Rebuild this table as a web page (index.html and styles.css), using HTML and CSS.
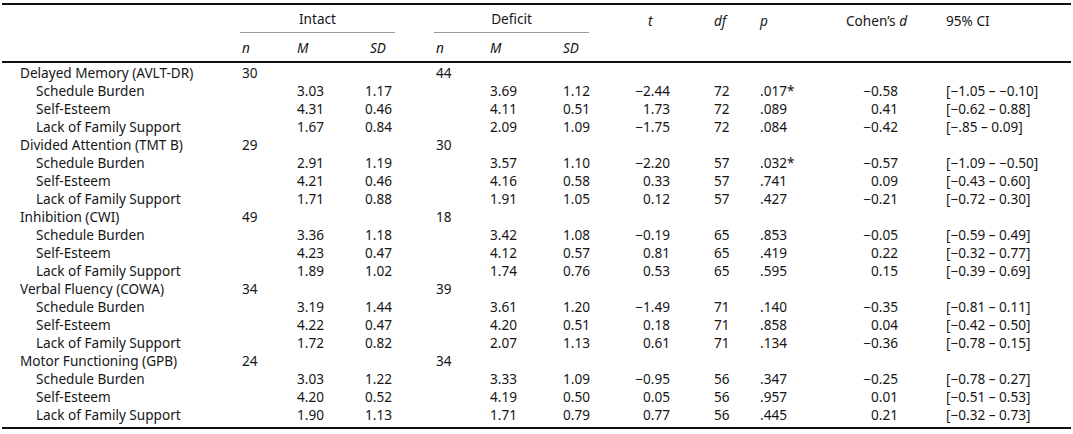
FILE: index.html
```html
<!DOCTYPE html>
<html lang="en">
<head>
<meta charset="utf-8">
<title>Cognitive deficit comparison</title>
<link rel="stylesheet" href="styles.css">
</head>
<body>
<table class="stats">
  <colgroup>
    <col class="c-label"><col class="c-n"><col class="c-m"><col class="c-sd">
    <col class="c-n2"><col class="c-m2"><col class="c-sd2">
    <col class="c-t"><col class="c-df"><col class="c-p"><col class="c-d"><col class="c-ci">
  </colgroup>
  <thead>
    <tr class="h1">
      <th></th>
      <th colspan="3" class="group"><div class="group-label">Intact</div></th>
      <th colspan="3" class="group"><div class="group-label">Deficit</div></th>
      <th class="h-t"><i>t</i></th>
      <th><i>df</i></th>
      <th><i>p</i></th>
      <th>Cohen’s <i>d</i></th>
      <th>95% CI</th>
    </tr>
    <tr class="h2">
      <th></th>
      <th><i>n</i></th><th><i>M</i></th><th class="h-sd"><i>SD</i></th>
      <th><i>n</i></th><th><i>M</i></th><th><i>SD</i></th>
      <th></th><th></th><th></th><th></th><th></th>
    </tr>
  </thead>
  <tbody>
    <tr class="grp first"><td class="lbl">Delayed Memory (AVLT-DR)</td><td>30</td><td></td><td></td><td>44</td><td></td><td></td><td class="r"></td><td></td><td></td><td class="r d"></td><td></td></tr>
    <tr><td class="sub">Schedule Burden</td><td></td><td>3.03</td><td>1.17</td><td></td><td>3.69</td><td>1.12</td><td class="r">−2.44</td><td>72</td><td>.017*</td><td class="r d">−0.58</td><td>[−1.05 – −0.10]</td></tr>
    <tr><td class="sub">Self-Esteem</td><td></td><td>4.31</td><td>0.46</td><td></td><td>4.11</td><td>0.51</td><td class="r">1.73</td><td>72</td><td>.089</td><td class="r d">0.41</td><td>[−0.62 – 0.88]</td></tr>
    <tr><td class="sub">Lack of Family Support</td><td></td><td>1.67</td><td>0.84</td><td></td><td>2.09</td><td>1.09</td><td class="r">−1.75</td><td>72</td><td>.084</td><td class="r d">−0.42</td><td>[−.85 – 0.09]</td></tr>

    <tr class="grp"><td class="lbl">Divided Attention (TMT B)</td><td>29</td><td></td><td></td><td>30</td><td></td><td></td><td class="r"></td><td></td><td></td><td class="r d"></td><td></td></tr>
    <tr><td class="sub">Schedule Burden</td><td></td><td>2.91</td><td>1.19</td><td></td><td>3.57</td><td>1.10</td><td class="r">−2.20</td><td>57</td><td>.032*</td><td class="r d">−0.57</td><td>[−1.09 – −0.50]</td></tr>
    <tr><td class="sub">Self-Esteem</td><td></td><td>4.21</td><td>0.46</td><td></td><td>4.16</td><td>0.58</td><td class="r">0.33</td><td>57</td><td>.741</td><td class="r d">0.09</td><td>[−0.43 – 0.60]</td></tr>
    <tr><td class="sub">Lack of Family Support</td><td></td><td>1.71</td><td>0.88</td><td></td><td>1.91</td><td>1.05</td><td class="r">0.12</td><td>57</td><td>.427</td><td class="r d">−0.21</td><td>[−0.72 – 0.30]</td></tr>

    <tr class="grp"><td class="lbl">Inhibition (CWI)</td><td>49</td><td></td><td></td><td>18</td><td></td><td></td><td class="r"></td><td></td><td></td><td class="r d"></td><td></td></tr>
    <tr><td class="sub">Schedule Burden</td><td></td><td>3.36</td><td>1.18</td><td></td><td>3.42</td><td>1.08</td><td class="r">−0.19</td><td>65</td><td>.853</td><td class="r d">−0.05</td><td>[−0.59 – 0.49]</td></tr>
    <tr><td class="sub">Self-Esteem</td><td></td><td>4.23</td><td>0.47</td><td></td><td>4.12</td><td>0.57</td><td class="r">0.81</td><td>65</td><td>.419</td><td class="r d">0.22</td><td>[−0.32 – 0.77]</td></tr>
    <tr><td class="sub">Lack of Family Support</td><td></td><td>1.89</td><td>1.02</td><td></td><td>1.74</td><td>0.76</td><td class="r">0.53</td><td>65</td><td>.595</td><td class="r d">0.15</td><td>[−0.39 – 0.69]</td></tr>

    <tr class="grp"><td class="lbl">Verbal Fluency (COWA)</td><td>34</td><td></td><td></td><td>39</td><td></td><td></td><td class="r"></td><td></td><td></td><td class="r d"></td><td></td></tr>
    <tr><td class="sub">Schedule Burden</td><td></td><td>3.19</td><td>1.44</td><td></td><td>3.61</td><td>1.20</td><td class="r">−1.49</td><td>71</td><td>.140</td><td class="r d">−0.35</td><td>[−0.81 – 0.11]</td></tr>
    <tr><td class="sub">Self-Esteem</td><td></td><td>4.22</td><td>0.47</td><td></td><td>4.20</td><td>0.51</td><td class="r">0.18</td><td>71</td><td>.858</td><td class="r d">0.04</td><td>[−0.42 – 0.50]</td></tr>
    <tr><td class="sub">Lack of Family Support</td><td></td><td>1.72</td><td>0.82</td><td></td><td>2.07</td><td>1.13</td><td class="r">0.61</td><td>71</td><td>.134</td><td class="r d">−0.36</td><td>[−0.78 – 0.15]</td></tr>

    <tr class="grp"><td class="lbl">Motor Functioning (GPB)</td><td>24</td><td></td><td></td><td>34</td><td></td><td></td><td class="r"></td><td></td><td></td><td class="r d"></td><td></td></tr>
    <tr><td class="sub">Schedule Burden</td><td></td><td>3.03</td><td>1.22</td><td></td><td>3.33</td><td>1.09</td><td class="r">−0.95</td><td>56</td><td>.347</td><td class="r d">−0.25</td><td>[−0.78 – 0.27]</td></tr>
    <tr><td class="sub">Self-Esteem</td><td></td><td>4.20</td><td>0.52</td><td></td><td>4.19</td><td>0.50</td><td class="r">0.05</td><td>56</td><td>.957</td><td class="r d">0.01</td><td>[−0.51 – 0.53]</td></tr>
    <tr class="last"><td class="sub">Lack of Family Support</td><td></td><td>1.90</td><td>1.13</td><td></td><td>1.71</td><td>0.79</td><td class="r">0.77</td><td>56</td><td>.445</td><td class="r d">0.21</td><td>[−0.32 – 0.73]</td></tr>
  </tbody>
</table>
</body>
</html>
```

FILE: styles.css
```css
html, body {
  margin: 0;
  padding: 0;
  background: #fff;
}

body {
  font-family: "Noto Sans", "Open Sans", sans-serif;
  font-size: 13.6px;
  color: #161616;
}

.stats {
  margin: 3px 0 0 2px;
  width: 1069px;
  table-layout: fixed;
  border-collapse: separate;
  border-spacing: 0;
  border-top: 2px solid #111;
  border-bottom: 2px solid #111;
}

.c-label { width: 240px; }
.c-n { width: 55px; }
.c-m { width: 68px; }
.c-sd { width: 71px; }
.c-n2 { width: 54px; }
.c-m2 { width: 73px; }
.c-sd2 { width: 42px; }
.c-t { width: 109px; }
.c-df { width: 46px; }
.c-p { width: 86px; }
.c-d { width: 100px; }
.c-ci { width: 125px; }

.stats th,
.stats td {
  padding: 0;
  text-align: left;
  font-weight: normal;
  white-space: nowrap;
}

.stats th {
  vertical-align: middle;
}

.h1 th {
  height: 26px;
  padding-top: 2px;
}

.h1 th.group {
  height: 28px;
  padding-top: 0;
  vertical-align: bottom;
}

.group-label {
  width: 155px;
  margin-left: -2px;
  text-align: center;
  line-height: 26px;
  padding-top: 1px;
  border-bottom: 1px solid #9a9a9a;
}

.h1 th.h-t {
  padding-left: 43px;
}

.h2 th {
  height: 28px;
  border-bottom: 2px solid #111;
}

.h2 th.h-sd {
  padding-left: 5px;
}

.stats td {
  height: 18px;
  line-height: 18px;
  vertical-align: middle;
}

.stats tr.first td {
  padding-top: 1px;
}

.stats tr.last td {
  padding-bottom: 3px;
}

.stats td.lbl {
  padding-left: 18px;
}

.stats td.sub {
  padding-left: 34px;
}

.stats td.r {
  text-align: right;
  padding-right: 44px;
}

.stats td.r.d {
  padding-right: 48px;
}
```
